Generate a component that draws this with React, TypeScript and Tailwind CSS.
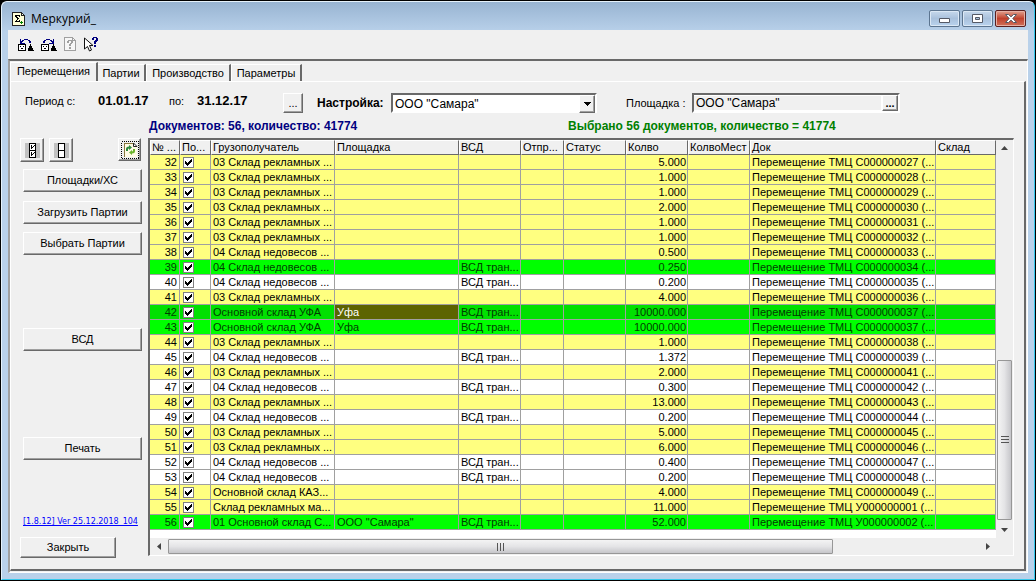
import type { ReactNode } from 'react'
import clsx from 'clsx'

type RowKind = 'yellow' | 'white' | 'green' | 'current'

interface Row {
  no: number
  kind: RowKind
  receiver: string
  place?: string
  qty: string
  doc: string
}

const ADS = '03 Склад рекламных ...'
const UNDER = '04 Склад недовесов ...'
const UFA = 'Основной склад УФА'

const rows: Row[] = [
  { no: 32, kind: 'yellow', receiver: ADS, qty: '5.000', doc: 'С000000027' },
  { no: 33, kind: 'yellow', receiver: ADS, qty: '1.000', doc: 'С000000028' },
  { no: 34, kind: 'yellow', receiver: ADS, qty: '1.000', doc: 'С000000029' },
  { no: 35, kind: 'yellow', receiver: ADS, qty: '2.000', doc: 'С000000030' },
  { no: 36, kind: 'yellow', receiver: ADS, qty: '1.000', doc: 'С000000031' },
  { no: 37, kind: 'yellow', receiver: ADS, qty: '1.000', doc: 'С000000032' },
  { no: 38, kind: 'yellow', receiver: UNDER, qty: '0.500', doc: 'С000000033' },
  { no: 39, kind: 'green', receiver: UNDER, qty: '0.250', doc: 'С000000034' },
  { no: 40, kind: 'white', receiver: UNDER, qty: '0.200', doc: 'С000000035' },
  { no: 41, kind: 'yellow', receiver: ADS, qty: '4.000', doc: 'С000000036' },
  { no: 42, kind: 'current', receiver: UFA, place: 'Уфа', qty: '10000.000', doc: 'С000000037' },
  { no: 43, kind: 'green', receiver: UFA, place: 'Уфа', qty: '10000.000', doc: 'С000000037' },
  { no: 44, kind: 'yellow', receiver: ADS, qty: '1.000', doc: 'С000000038' },
  { no: 45, kind: 'white', receiver: UNDER, qty: '1.372', doc: 'С000000039' },
  { no: 46, kind: 'yellow', receiver: ADS, qty: '2.000', doc: 'С000000041' },
  { no: 47, kind: 'white', receiver: UNDER, qty: '0.300', doc: 'С000000042' },
  { no: 48, kind: 'yellow', receiver: ADS, qty: '13.000', doc: 'С000000043' },
  { no: 49, kind: 'white', receiver: UNDER, qty: '0.200', doc: 'С000000044' },
  { no: 50, kind: 'yellow', receiver: ADS, qty: '5.000', doc: 'С000000045' },
  { no: 51, kind: 'yellow', receiver: ADS, qty: '6.000', doc: 'С000000046' },
  { no: 52, kind: 'white', receiver: UNDER, qty: '0.400', doc: 'С000000047' },
  { no: 53, kind: 'white', receiver: UNDER, qty: '0.200', doc: 'С000000048' },
  { no: 54, kind: 'yellow', receiver: 'Основной склад КАЗ...', qty: '4.000', doc: 'С000000049' },
  { no: 55, kind: 'yellow', receiver: 'Склад рекламных ма...', qty: '11.000', doc: 'У000000001' },
  { no: 56, kind: 'green', receiver: '01 Основной склад С...', place: 'ООО "Самара"', qty: '52.000', doc: 'У000000002' },
]

const columns = [
  { title: '№ ...', width: 'w-[30px]' },
  { title: 'По...', width: 'w-[31px]' },
  { title: 'Грузополучатель', width: 'w-[124px]' },
  { title: 'Площадка', width: 'w-[124px]' },
  { title: 'ВСД', width: 'w-[62px]' },
  { title: 'Отпр...', width: 'w-[43px]' },
  { title: 'Статус', width: 'w-[62px]' },
  { title: 'Колво', width: 'w-[62px]' },
  { title: 'КолвоМест', width: 'w-[62px]' },
  { title: 'Док', width: 'w-auto' },
  { title: 'Склад', width: 'w-[60px]' },
]

const rowColors: Record<RowKind, string> = {
  yellow: 'bg-[#ffff80]',
  white: 'bg-white',
  green: 'bg-[#00ff00] text-[#003c00]',
  current: 'bg-[#00e000] text-[#003c00]',
}

const RAISED =
  'border border-t-white border-l-white border-r-[#696969] border-b-[#696969] bg-[#f0f0f0] shadow-[inset_-1px_-1px_0_#a0a0a0]'
const SUNKEN = 'border-2 border-t-[#696969] border-l-[#696969] border-r-white border-b-white'

interface ButtonProps {
  children: ReactNode
  className?: string
  label?: string
}

const Button = ({ children, className, label }: ButtonProps) => (
  <button
    type="button"
    aria-label={label}
    className={clsx('flex shrink-0 items-center justify-center', RAISED, className)}
  >
    {children}
  </button>
)

const AppIcon = () => (
  <svg width="13" height="14" viewBox="0 0 13 14" shapeRendering="crispEdges">
    <path d="M0.5 0.5h9l3 3v10h-12z" fill="#ffffd8" stroke="#222" />
    <path d="M9.5 0.5v3h3" fill="none" stroke="#222" />
    <path d="M3 3h5v2H7V4H5v1h1v1h1v1H6v1H5v1h2V8h1v2H3V9h1V8h1V6H4V5H3z" fill="#000" />
    <path d="M8 10h1V9h1v1h1v1h-1v1H9v-1H8z" fill="#008000" />
  </svg>
)

const RollIcon = ({ forward }: { forward?: boolean }) => (
  <svg width="16" height="14" viewBox="0 0 16 14" shapeRendering="crispEdges">
    <path d="M0.5 6.5h7v6h-7z" fill="#fff" stroke="#000" />
    <path d="M2 8h1v1H2zM5 8h1v1H5zM3 10h2v1H3zM12 6h1v2h1v2h1v2h1v1h-6v-1h0v-2h1V8h1z" fill="#000" />
    {forward ? (
      <path d="M2 5V3h1V2h2V1h4v1h2v1h1V1h1v5H8V5h3V4h-1V3H9V2H5v1H4v2z" fill="#000080" />
    ) : (
      <path d="M13 5V3h-1V2h-2V1H6v1H4v1H3V1H2v5h5V5H4V4h1V3h1V2h4v1h1v2z" fill="#000080" />
    )}
  </svg>
)

const PageHelpIcon = () => (
  <svg width="13" height="15" viewBox="0 0 13 15" shapeRendering="crispEdges">
    <path d="M0.5 0.5h8l3 3v10h-11z" fill="#f7f7f7" stroke="#a0a0a0" />
    <path d="M8.5 0.5v3h3" fill="none" stroke="#a0a0a0" />
    <path d="M3 4h1V3h4v1h1v2H8v1H7v2H5V7h1V6h1V4H5v2H3zM5 10h2v2H5z" fill="#a0a0a0" />
  </svg>
)

const CursorHelpIcon = () => (
  <svg width="15" height="15" viewBox="0 0 15 15">
    <path d="M0.5 1v11l3-2.5 2 4.5 2-1-2-4.5h3.500z" fill="#fff" stroke="#111" />
    <path
      d="M8 1h1V0h4v1h1v3h-1v1h-1v2h-2V4h1V3h1V1h-2v2H8zM10 8h2v2h-2z"
      fill="#000080"
      shapeRendering="crispEdges"
    />
  </svg>
)

const CheckAllIcon = ({ checked }: { checked?: boolean }) => (
  <svg width="15" height="15" viewBox="0 0 15 15" shapeRendering="crispEdges">
    <path d="M0 0h15v15H0z" fill="#c0c0c0" />
    <path d="M4.500 0.500h6v14h-6zM4.500 7.500h6" fill="#fff" stroke="#000" />
    {checked && (
      <path d="M6 2h1v2h1V3h1V2h1v1H9v1H8v1H7v1H6zM6 9h1v2h1v-1h1V9h1v1H9v1H8v1H7v1H6z" fill="#000" />
    )}
  </svg>
)

const RefreshIcon = () => (
  <svg width="18" height="18" viewBox="0 0 18 18">
    <path d="M4 2h8l4 4v10H4z" fill="#fffbe6" />
    <path
      d="M0.500 0.500h17v17h-17z"
      fill="none"
      stroke="#000"
      strokeDasharray="1 1"
      shapeRendering="crispEdges"
    />
    <path d="M3.500 16V2.500h9" fill="none" stroke="#8a7a40" shapeRendering="crispEdges" />
    <path d="M12.500 2v3.500H16z" fill="#fff" stroke="#222" />
    <path d="M5 10V8q0-2.500 3-2.500V4l3 2.500L8 9V7.500q-1 0-1 1V10z" fill="#2c8a3c" />
    <path d="M14 8v2q0 2.500-3 2.500V14l-3-2.500L11 9v1.500q1 0 1-1V8z" fill="#6ab52b" />
  </svg>
)

const Arrow = ({ d }: { d: string }) => (
  <svg width="7" height="7" viewBox="0 0 7 7">
    <path d={d} fill="#444" />
  </svg>
)

const CheckBox = ({ label }: { label: string }) => (
  <span className="ml-[3px] grid size-[11px] place-items-center">
    <input
      type="checkbox"
      defaultChecked
      aria-label={label}
      className="size-[11px] appearance-none border border-[#808080] bg-white [grid-area:1/1]"
    />
    <svg
      width="7"
      height="7"
      viewBox="0 0 7 7"
      shapeRendering="crispEdges"
      className="pointer-events-none [grid-area:1/1]"
    >
      <path d="M0 2h1v1h1v1h1V3h1V2h1V1h1V0h1v3H6v1H5v1H4v1H3v1H2V6H1V5H0z" />
    </svg>
  </span>
)

const TitleBar = () => (
  <header className="flex h-[28px] shrink-0 items-start justify-between pr-[2px] pl-1">
    <div className="flex items-center gap-[6px] pt-2">
      <AppIcon />
      <h1 className="font-['Open_Sans','Noto_Sans',sans-serif] text-[12px] leading-[18px]">Меркурий_</h1>
    </div>
    <div className="flex gap-[2px] pt-2">
      <button
        type="button"
        aria-label="Свернуть"
        className="flex h-[17px] w-[31px] items-center justify-center rounded-[2px] border border-[#5c7590] bg-linear-to-b from-[#c7d9ec] via-[#a9c1dc] to-[#b9d3ee] pt-1 shadow-[inset_0_0_0_1px_#dbe8f5]"
      >
        <svg width="11" height="5" viewBox="0 0 11 5">
          <path d="M0.500 0.500h10v4h-10z" fill="#fff" stroke="#555a66" />
        </svg>
      </button>
      <button
        type="button"
        aria-label="Развернуть"
        className="flex h-[17px] w-[31px] items-center justify-center rounded-[2px] border border-[#5c7590] bg-linear-to-b from-[#c7d9ec] via-[#a9c1dc] to-[#b9d3ee] shadow-[inset_0_0_0_1px_#dbe8f5]"
      >
        <svg width="11" height="9" viewBox="0 0 11 9">
          <path d="M0.500 0.500h10v8h-10zM3.500 3.500v2h4v-2z" fill="#fff" fillRule="evenodd" stroke="#555a66" />
        </svg>
      </button>
      <button
        type="button"
        aria-label="Закрыть окно"
        className="flex h-[17px] w-[31px] items-center justify-center rounded-[2px] border border-[#5a1f1f] bg-linear-to-b from-[#e0a190] via-[#c0402c] to-[#d0705a] shadow-[inset_0_0_0_1px_#e6b0a4]"
      >
        <svg width="12" height="9" viewBox="0 0 12 9">
          <path
            d="M0.500 0.500h3L6 2.800 8.500 0.500h3L7.800 4.500l3.700 4h-3L6 6.200 3.500 8.500h-3l3.700-4z"
            fill="#fff"
            stroke="#555a66"
          />
        </svg>
      </button>
    </div>
  </header>
)

const ToolBar = () => (
  <div className="flex h-[29px] shrink-0 items-center gap-[7px] pl-[10px]">
    <button type="button" aria-label="Назад">
      <RollIcon />
    </button>
    <button type="button" aria-label="Вперёд">
      <RollIcon forward />
    </button>
    <button type="button" aria-label="Описание">
      <PageHelpIcon />
    </button>
    <button type="button" aria-label="Помощь">
      <CursorHelpIcon />
    </button>
  </div>
)

const Tabs = () => (
  <div role="tablist" className="flex items-end">
    <button
      type="button"
      role="tab"
      aria-selected
      className="-mb-px h-[20px] w-[88px] border-t border-r-2 border-l border-t-white border-r-[#696969] border-l-white bg-[#f0f0f0] pb-[2px]"
    >
      Перемещения
    </button>
    <button type="button" role="tab" className="h-[17px] w-[48px] border-t border-r-2 border-t-white border-r-[#696969]">
      Партии
    </button>
    <button
      type="button"
      role="tab"
      className="h-[17px] w-[85px] border-t border-r-2 border-l border-t-white border-r-[#696969] border-l-white"
    >
      Производство
    </button>
    <button
      type="button"
      role="tab"
      className="h-[17px] w-[71px] border-t border-r-2 border-l border-t-white border-r-[#696969] border-l-white"
    >
      Параметры
    </button>
  </div>
)

const Filters = () => (
  <div className="flex h-[20px] items-center">
    <div className="flex items-center pb-1">
      <span className="w-[73px]">Период с:</span>
      <b className="w-[71px] text-[13px]">01.01.17</b>
      <span className="w-[28px]">по:</span>
      <b className="w-[86px] text-[13px]">31.12.17</b>
    </div>
    <Button className="h-[20px] w-[20px]" label="Выбрать период">
      ...
    </Button>
    <label htmlFor="config" className="ml-[14px] w-[74px] text-[12px] font-bold whitespace-nowrap">
      Настройка:
    </label>
    <div className={clsx('grid h-[20px] w-[206px] bg-white', SUNKEN)}>
      <select id="config" className="w-full appearance-none pl-[2px] text-[12px] outline-none [grid-area:1/1]">
        <option>ООО "Самара"</option>
      </select>
      <span
        className={clsx(
          'pointer-events-none flex w-[16px] items-center justify-center justify-self-end [grid-area:1/1]',
          RAISED,
        )}
      >
        <svg width="7" height="4" viewBox="0 0 7 4" shapeRendering="crispEdges">
          <path d="M0 0h7v1H6v1H5v1H4v1H3V3H2V2H1V1H0z" />
        </svg>
      </span>
    </div>
    <label htmlFor="place" className="ml-[29px] w-[66px] whitespace-nowrap">
      Площадка :
    </label>
    <div className={clsx('flex h-[20px] w-[208px]', SUNKEN)}>
      <input
        id="place"
        defaultValue={'ООО "Самара"'}
        className="min-w-0 flex-1 border border-l-0 border-white pl-[2px] text-[12px] outline-none"
      />
      <Button className="w-[16px] font-bold" label="Выбрать площадку">
        ...
      </Button>
    </div>
  </div>
)

const SideBar = () => (
  <aside className="-mb-[2px] flex w-[128px] shrink-0 flex-col">
    <div className="flex w-[121px] gap-[5px]">
      <Button className="size-[24px]" label="Отметить все">
        <CheckAllIcon checked />
      </Button>
      <Button className="size-[24px]" label="Снять отметки">
        <CheckAllIcon />
      </Button>
      <Button className="ml-auto size-[23px]" label="Обновить">
        <RefreshIcon />
      </Button>
    </div>
    <div className="mt-[7px] ml-[3px] flex w-[119px] flex-1 flex-col">
      <Button className="h-[23px]">Площадки/ХС</Button>
      <Button className="mt-[9px] h-[23px]">Загрузить Партии</Button>
      <Button className="mt-[8px] h-[23px]">Выбрать Партии</Button>
      <Button className="mt-[73px] h-[23px]">ВСД</Button>
      <Button className="mt-[86px] h-[23px]">Печать</Button>
      <a
        href="#version"
        className="mt-auto font-['DejaVu_Sans',sans-serif] text-[8px] whitespace-nowrap text-[#0000ff] underline"
      >
        [1.8.12] Ver 25.12.2018_104
      </a>
    </div>
    <Button className="mt-[9px] h-[21px] w-[96px]">Закрыть</Button>
  </aside>
)

const DocumentsTable = () => (
  <table className="w-full table-fixed border-collapse">
    <colgroup>
      {columns.map(({ title, width }) => (
        <col key={title} className={width} />
      ))}
    </colgroup>
    <thead>
      <tr>
        {columns.map(({ title }) => (
          <th key={title} className="h-[15px] p-0 text-left font-normal">
            <div className="h-[15px] overflow-hidden border border-t-white border-r-[#696969] border-b-[#696969] border-l-white bg-[#f0f0f0] pl-[1px] leading-[13px] whitespace-nowrap">
              {title}
            </div>
          </th>
        ))}
      </tr>
    </thead>
    <tbody>
      {rows.map(({ no, kind, receiver, place, qty, doc }) => (
        <tr
          key={no}
          className={clsx(
            rowColors[kind],
            '*:h-[15px] *:overflow-hidden *:p-0 *:align-top *:leading-[15px] *:whitespace-nowrap *:shadow-[inset_-1px_-1px_0_#a0a0a0]',
          )}
        >
          <td className="text-right">
            <span className="pr-[3px]">{no}</span>
          </td>
          <td className="pt-[2px]!">
            <CheckBox label={`Документ ${no}`} />
          </td>
          <td>
            <span className="pl-[2px]">{receiver}</span>
          </td>
          <td className={clsx(kind === 'current' && 'bg-[#5c6400] text-white')}>
            <span className="pl-[2px]">{place}</span>
          </td>
          <td>
            <span className="pl-[2px]">{kind !== 'yellow' && 'ВСД тран...'}</span>
          </td>
          <td />
          <td />
          <td className="text-right">
            <span className="pr-[2px]">{qty}</span>
          </td>
          <td />
          <td>
            <span className="pl-[2px]">Перемещение ТМЦ {doc} (...</span>
          </td>
          <td />
        </tr>
      ))}
    </tbody>
  </table>
)

const VerticalScroll = () => (
  <div className="flex w-[17px] shrink-0 flex-col items-center bg-[#efefef]">
    <span className="flex h-[17px] items-center">
      <Arrow d="M0 5l3.500-4L7 5z" />
    </span>
    <div className="flex w-full flex-1 flex-col justify-end px-px">
      <div className="flex h-[44%] items-center justify-center rounded-[1px] border border-[#979797] bg-linear-to-r from-[#f4f4f4] via-[#e4e4e6] to-[#c6c6ca]">
        <svg width="8" height="8" viewBox="0 0 8 8" shapeRendering="crispEdges">
          <path d="M0 0h8v1H0zM0 3h8v1H0zM0 6h8v1H0z" fill="#555" />
        </svg>
      </div>
    </div>
    <span className="flex h-[18px] items-center">
      <Arrow d="M0 2l3.500 4L7 2z" />
    </span>
  </div>
)

const HorizontalScroll = () => (
  <div className="flex h-[17px] shrink-0 bg-[#efefef] pr-[17px]">
    <span className="flex w-[18px] items-center justify-center">
      <Arrow d="M5 0v7L1 3.500z" />
    </span>
    <div className="flex-1 py-px">
      <div className="flex h-full w-[82%] items-center justify-center rounded-[1px] border border-[#979797] bg-linear-to-b from-[#f4f4f4] via-[#e4e4e6] to-[#c6c6ca]">
        <svg width="8" height="8" viewBox="0 0 8 8" shapeRendering="crispEdges">
          <path d="M0 0v8h1V0zM3 0v8h1V0zM6 0v8h1V0z" fill="#555" />
        </svg>
      </div>
    </div>
    <span className="flex w-[17px] items-center justify-center">
      <Arrow d="M2 0v7l4-3.500z" />
    </span>
  </div>
)

const App = () => (
  <div className="flex min-h-screen bg-black font-['Liberation_Sans',Arial,sans-serif] text-[11px] text-black">
    <div className="m-px flex min-w-0 flex-1 flex-col rounded-t-[6px] border border-t-[#e6f2fb] border-r-[#35c8ec] border-b-[#35c8ec] border-l-[#e6f2fb] bg-[#b9d1ea] bg-linear-to-b from-[#98b4d2] to-[#b9d1ea] to-[30px] px-[6px] pb-[6px]">
      <TitleBar />
      <div className="flex min-w-0 flex-1 flex-col bg-[#f0f0f0]">
        <ToolBar />
        <main className="flex flex-1 flex-col border-t-2 border-r border-b border-l-2 border-t-[#696969] border-r-white border-b-white border-l-[#a0a0a0] pt-px pr-px pb-px">
          <Tabs />
          <div className="flex flex-1 flex-col border-t border-r-2 border-b-2 border-l border-t-white border-r-[#696969] border-b-[#696969] border-l-white pt-[11px] pr-[10px] pb-[13px] pl-[9px]">
            <div className="pl-[5px]">
              <Filters />
            </div>
            <div className="flex h-[25px] items-center pl-[129px] text-[12px] font-bold">
              <span className="w-[419px] text-[#000080]">Документов: 56, количество: 41774</span>
              <span className="text-[#008000]">Выбрано 56 документов, количество = 41774</span>
            </div>
            <div className="flex flex-1">
              <SideBar />
              <div className="flex min-w-0 flex-1 flex-col border-t-2 border-r border-b border-l-2 border-t-[#696969] border-r-white border-b-white border-l-[#696969] bg-white">
                <div className="flex flex-1">
                  <div className="min-w-0 flex-1 pb-[8px]">
                    <DocumentsTable />
                  </div>
                  <VerticalScroll />
                </div>
                <HorizontalScroll />
              </div>
            </div>
          </div>
        </main>
      </div>
    </div>
  </div>
)

export default App
